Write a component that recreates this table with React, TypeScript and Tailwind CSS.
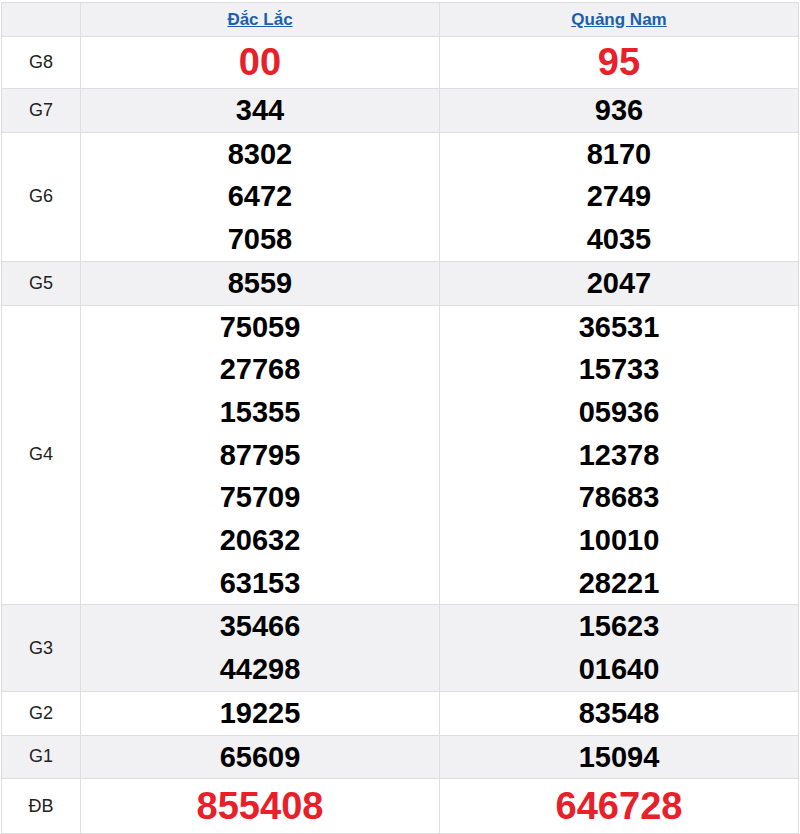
const provinces = ["Đắc Lắc", "Quảng Nam"]

type Row = { label: string; values: string[][]; big?: boolean; shade?: boolean }

const rows: Row[] = [
  { label: "G8", values: [["00"], ["95"]], big: true },
  { label: "G7", values: [["344"], ["936"]], shade: true },
  { label: "G6", values: [["8302", "6472", "7058"], ["8170", "2749", "4035"]] },
  { label: "G5", values: [["8559"], ["2047"]], shade: true },
  {
    label: "G4",
    values: [
      ["75059", "27768", "15355", "87795", "75709", "20632", "63153"],
      ["36531", "15733", "05936", "12378", "78683", "10010", "28221"],
    ],
  },
  { label: "G3", values: [["35466", "44298"], ["15623", "01640"]], shade: true },
  { label: "G2", values: [["19225"], ["83548"]] },
  { label: "G1", values: [["65609"], ["15094"]], shade: true },
  { label: "ĐB", values: [["855408"], ["646728"]], big: true },
]

export default function App() {
  return (
    <div className="bg-white pt-[2px] pl-[1px] font-['Liberation_Sans',Arial,sans-serif]">
      <table className="w-[798px] table-fixed border-collapse border border-[#dedede]">
        <colgroup>
          <col className="w-[79px]" />
          <col className="w-[359px]" />
          <col className="w-[359px]" />
        </colgroup>
        <thead>
          <tr className="h-[34px] bg-[#f1f1f3]">
            <th className="border border-[#dedede]"></th>
            {provinces.map((p) => (
              <th key={p} className="border border-[#dedede] text-center">
                <a href="#" className="text-[17px] font-bold text-[#1b5fae] underline">
                  {p}
                </a>
              </th>
            ))}
          </tr>
        </thead>
        <tbody>
          {rows.map((r) => (
            <tr key={r.label} className={r.shade ? "bg-[#f1f1f3]" : "bg-white"}>
              <td className="border border-[#dedede] text-center text-[18px] text-[#222]">{r.label}</td>
              {r.values.map((col, i) => (
                <td key={i} className="border border-[#dedede] text-center">
                  {col.map((v) =>
                    r.big ? (
                      <div
                        key={v}
                        className={
                          r.label === "G8"
                            ? "text-[38px] font-bold leading-[51px] text-[#e8202a]"
                            : "text-[38px] font-bold leading-[54px] text-[#e8202a]"
                        }
                      >
                        {v}
                      </div>
                    ) : (
                      <div key={v} className="text-[29px] font-bold leading-[42.7px] text-black">
                        {v}
                      </div>
                    )
                  )}
                </td>
              ))}
            </tr>
          ))}
        </tbody>
      </table>
    </div>
  )
}
